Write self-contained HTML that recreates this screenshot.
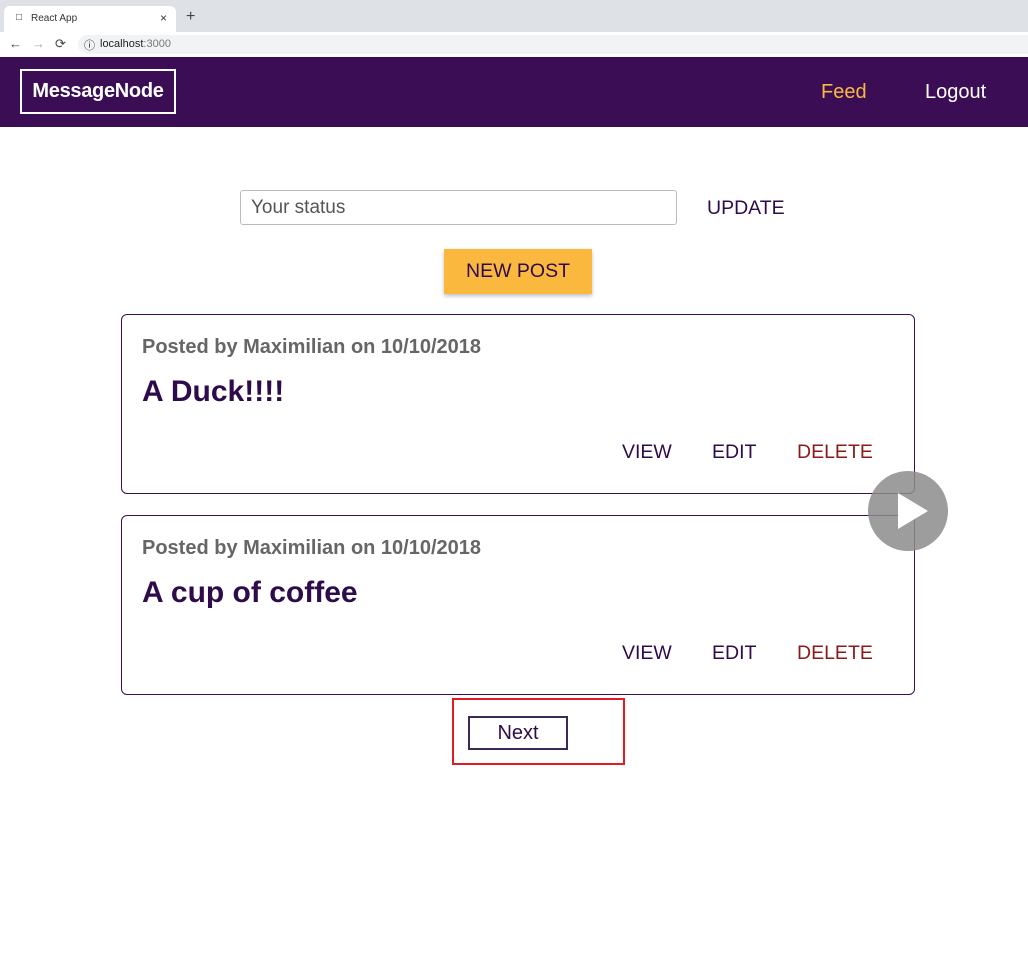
<!DOCTYPE html>
<html><head><style>
*{box-sizing:border-box;margin:0;padding:0}
body{width:1028px;height:956px;position:relative;background:#fff;font-family:"Liberation Sans",sans-serif;overflow:hidden}
.abs{position:absolute}
.tabbar{left:0;top:0;width:1028px;height:32px;background:#dee1e6}
.tab{left:4px;top:6px;width:172px;height:26px;background:#fff;border-radius:6px 6px 0 0;font-size:10px;color:#333}
.addr{left:0;top:32px;width:1028px;height:25px;background:#fff}
.url{left:78px;top:35px;width:950px;height:19px;background:#f1f3f4;border-radius:10px 0 0 10px;font-size:11px;color:#222}
.nav{left:0;top:57px;width:1028px;height:70px;background:#3b0d55}
.logo{left:20px;top:69px;width:156px;height:45px;border:2px solid #fff;color:#fff;font-weight:bold;font-size:20px;text-align:center;line-height:41px;letter-spacing:-0.3px}
.card{left:121px;width:794px;height:180px;border:1.5px solid #3b0d55;border-radius:6px}
.meta{left:20px;top:21px;font-size:20px;font-weight:bold;color:#666}
.title{left:20px;top:60px;font-size:30px;font-weight:bold;color:#2e0b4a}
.act{top:126px;font-size:19.5px;color:#2e0b4a}
</style></head><body>
<div class="abs tabbar"></div>
<div class="abs tab"><span class="abs" style="left:12px;top:6px">&#9633;</span><span class="abs" style="left:27px;top:7px">React App</span><span class="abs" style="left:156px;top:5px;font-size:12px">×</span></div>
<div class="abs" style="left:186px;top:8px;font-size:16px;color:#444">+</div>
<div class="abs addr"></div>
<div class="abs" style="left:9px;top:36px;font-size:13px;color:#444">←</div>
<div class="abs" style="left:32px;top:36px;font-size:13px;color:#aaa">→</div>
<div class="abs" style="left:55px;top:36px;font-size:13px;color:#444">⟳</div>
<div class="abs url"><span class="abs" style="left:6px;top:2px;font-size:11px">ⓘ</span><span class="abs" style="left:22px;top:3px">localhost<span style="color:#777">:3000</span></span></div>
<div class="abs nav"></div>
<div class="abs logo">MessageNode</div>
<div class="abs" style="left:821px;top:81px;font-size:20px;color:#fab83f">Feed</div>
<div class="abs" style="left:925px;top:81px;font-size:20px;color:#fff">Logout</div>
<div class="abs" style="left:240px;top:190px;width:437px;height:35px;border:1px solid #bbb;border-radius:3px;font-size:19px;color:#555;padding:6px 10px">Your status</div>
<div class="abs" style="left:707px;top:197px;font-size:19.5px;color:#2e0b4a">UPDATE</div>
<div class="abs" style="left:444px;top:249px;width:148px;height:45px;background:#fab83f;box-shadow:0 2px 4px rgba(0,0,0,.25);font-size:19.5px;color:#2e0b4a;text-align:center;line-height:45px">NEW POST</div>
<div class="abs card" style="top:314px">
<div class="abs meta">Posted by Maximilian on 10/10/2018</div>
<div class="abs title">A Duck!!!!</div>
<div class="abs act" style="left:500px">VIEW</div>
<div class="abs act" style="left:590px">EDIT</div>
<div class="abs act" style="left:675px;color:#8b1a1a">DELETE</div>
</div>
<div class="abs card" style="top:515px">
<div class="abs meta">Posted by Maximilian on 10/10/2018</div>
<div class="abs title">A cup of coffee</div>
<div class="abs act" style="left:500px">VIEW</div>
<div class="abs act" style="left:590px">EDIT</div>
<div class="abs act" style="left:675px;color:#8b1a1a">DELETE</div>
</div>
<div class="abs" style="left:868px;top:471px;width:80px;height:80px;border-radius:50%;background:rgba(140,140,140,.85)"></div>
<svg class="abs" style="left:868px;top:471px" width="80" height="80"><polygon points="30,22 30,58 60,40" fill="#fff"/></svg>
<div class="abs" style="left:452px;top:698px;width:173px;height:67px;border:2px solid #e21c23"></div>
<div class="abs" style="left:468px;top:716px;width:100px;height:34px;border:2px solid #3b2a55;font-size:20px;color:#2e0b4a;text-align:center;line-height:30px">Next</div>
</body></html>
